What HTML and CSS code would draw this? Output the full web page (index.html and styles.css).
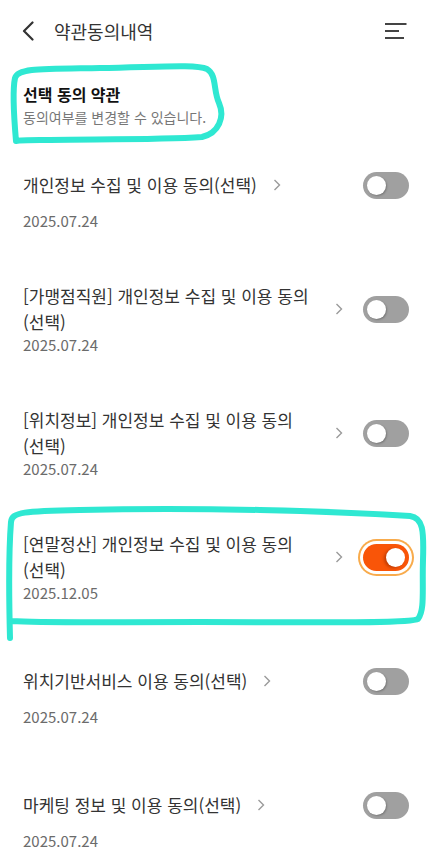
FILE: index.html
```html
<!DOCTYPE html>
<html lang="ko">
<head>
    <meta charset="UTF-8">
    <meta name="viewport" content="width=device-width, initial-scale=1.0">
    <title>약관동의내역</title>
    <link rel="stylesheet" href="styles.css">
</head>
<body>
    <div class="page">
        <header class="header">
            <svg class="back" width="12" height="20" viewBox="0 0 12 20">
                <path d="M10.5 1.5 L2 10 L10.5 18.5" fill="none" stroke="#333" stroke-width="2.2" stroke-linecap="round" stroke-linejoin="round"/>
            </svg>
            <h1 class="title">약관동의내역</h1>
            <svg class="menu" width="24" height="18" viewBox="0 0 24 18">
                <path d="M1 2 H22.5 M1 9 H15 M1 16 H20" stroke="#444" stroke-width="2.2"/>
            </svg>
        </header>

        <section class="intro">
            <h2>선택 동의 약관</h2>
            <p>동의여부를 변경할 수 있습니다.</p>
        </section>

        <ul class="terms">
            <li class="row">
                <div class="row-main">
                    <div class="row-title">
                        <span class="text">개인정보 수집 및 이용 동의(선택)</span>
                        <svg class="chev" width="8" height="12" viewBox="0 0 8 12"><path d="M1.5 1 L6.5 6 L1.5 11" fill="none" stroke="#9a9a9a" stroke-width="1.4"/></svg>
                    </div>
                    <span class="toggle"></span>
                </div>
                <div class="date">2025.07.24</div>
            </li>
            <li class="row">
                <div class="row-main">
                    <div class="row-title">
                        <span class="text">[가맹점직원] 개인정보 수집 및 이용 동의(선택)</span>
                        <svg class="chev" width="8" height="12" viewBox="0 0 8 12"><path d="M1.5 1 L6.5 6 L1.5 11" fill="none" stroke="#9a9a9a" stroke-width="1.4"/></svg>
                    </div>
                    <span class="toggle"></span>
                </div>
                <div class="date">2025.07.24</div>
            </li>
            <li class="row">
                <div class="row-main">
                    <div class="row-title">
                        <span class="text">[위치정보] 개인정보 수집 및 이용 동의(선택)</span>
                        <svg class="chev" width="8" height="12" viewBox="0 0 8 12"><path d="M1.5 1 L6.5 6 L1.5 11" fill="none" stroke="#9a9a9a" stroke-width="1.4"/></svg>
                    </div>
                    <span class="toggle"></span>
                </div>
                <div class="date">2025.07.24</div>
            </li>
            <li class="row">
                <div class="row-main">
                    <div class="row-title">
                        <span class="text">[연말정산] 개인정보 수집 및 이용 동의(선택)</span>
                        <svg class="chev" width="8" height="12" viewBox="0 0 8 12"><path d="M1.5 1 L6.5 6 L1.5 11" fill="none" stroke="#9a9a9a" stroke-width="1.4"/></svg>
                    </div>
                    <span class="toggle on"></span>
                </div>
                <div class="date">2025.12.05</div>
            </li>
            <li class="row">
                <div class="row-main">
                    <div class="row-title">
                        <span class="text">위치기반서비스 이용 동의(선택)</span>
                        <svg class="chev" width="8" height="12" viewBox="0 0 8 12"><path d="M1.5 1 L6.5 6 L1.5 11" fill="none" stroke="#9a9a9a" stroke-width="1.4"/></svg>
                    </div>
                    <span class="toggle"></span>
                </div>
                <div class="date">2025.07.24</div>
            </li>
            <li class="row">
                <div class="row-main">
                    <div class="row-title">
                        <span class="text">마케팅 정보 및 이용 동의(선택)</span>
                        <svg class="chev" width="8" height="12" viewBox="0 0 8 12"><path d="M1.5 1 L6.5 6 L1.5 11" fill="none" stroke="#9a9a9a" stroke-width="1.4"/></svg>
                    </div>
                    <span class="toggle"></span>
                </div>
                <div class="date">2025.07.24</div>
            </li>
        </ul>

        <!-- hand-drawn highlight marks on top of the screen -->
        <svg class="marks" width="432" height="848" viewBox="0 0 432 848">
            <path d="M16 141 C14 118 12 92 15 78 C18 68 40 69 100 68 C160 67 196 64 207 69 C217 75 213 90 219 103 C225 117 219 133 202 137 C160 140 90 139 40 140 C28 140 20 140 16 141"
                  fill="none" stroke="#2fe8d2" stroke-width="6" stroke-linecap="round" stroke-linejoin="round"/>
            <path d="M10 638 C9 600 8 560 11 522 C12 512 24 511 80 510 C200 507 330 511 410 516 C423 518 424 530 423 560 C422 590 425 610 418 619 C410 624 300 622 200 622 C100 622 40 623 12 621"
                  fill="none" stroke="#2fe8d2" stroke-width="6" stroke-linecap="round" stroke-linejoin="round"/>
        </svg>
    </div>
</body>
</html>
```

FILE: styles.css
```css
body {
    margin: 0;
    background-color: #ffffff;
    font-family: "Noto Sans CJK KR", "Noto Sans", sans-serif;
    color: #333;
}
.page {
    position: relative;
    width: 432px;
    height: 848px;
    overflow: hidden;
}
.header {
    display: flex;
    align-items: center;
    height: 62px;
    padding: 0 24px 0 22px;
}
.back {
    display: block;
    flex: none;
}
.title {
    margin: 0 0 0 20px;
    font-size: 18px;
    font-weight: 400;
    color: #333;
}
.menu {
    display: block;
    margin-left: auto;
}
.intro {
    padding: 20px 23px 6px;
}
.intro h2 {
    margin: 0;
    font-size: 16px;
    font-weight: 700;
    line-height: 24px;
    color: #111;
}
.intro p {
    margin: 1px 0 0;
    font-size: 14px;
    line-height: 20px;
    color: #777;
}
.terms {
    list-style: none;
    margin: 0;
    padding: 0;
}
.row {
    padding: 26px 23px 28px;
}
.row-main {
    display: flex;
    align-items: center;
    min-height: 52px;
    gap: 20px;
}
.row-title {
    flex: 1;
    min-width: 0;
    display: flex;
    align-items: center;
}
.text {
    flex: 0 1 auto;
    min-width: 0;
    font-size: 17px;
    line-height: 26px;
    color: #333;
    word-break: keep-all;
}
.chev {
    flex: none;
    margin-left: 16px;
}
.date {
    padding-top: 2px;
    font-size: 15px;
    line-height: 16px;
    color: #6b6b6b;
}
.toggle {
    position: relative;
    flex: none;
    width: 46px;
    height: 27px;
    border-radius: 14px;
    background-color: #a0a0a0;
}
.toggle::after {
    content: "";
    position: absolute;
    top: 4px;
    left: 4px;
    width: 19px;
    height: 19px;
    border-radius: 50%;
    background-color: #fff;
    box-shadow: 1px 1px 2px rgba(0, 0, 0, 0.25);
}
.toggle.on {
    background-color: #f95508;
    box-shadow: 0 0 0 3px #fff, 0 0 0 5px #f8ab4c;
}
.toggle.on::after {
    left: auto;
    right: 4px;
    box-shadow: -2px 1px 3px rgba(120, 30, 0, 0.45);
}
.marks {
    position: absolute;
    top: 0;
    left: 0;
    pointer-events: none;
}
```
